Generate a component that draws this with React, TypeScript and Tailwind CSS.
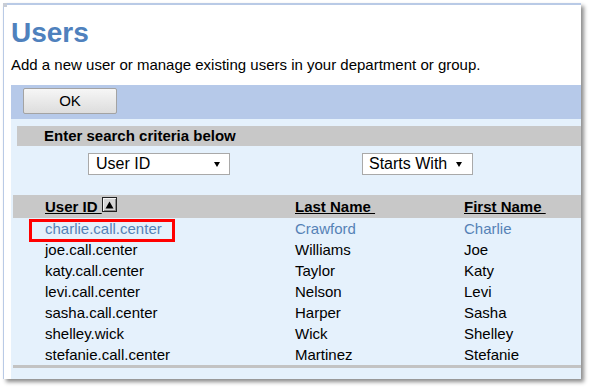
import React from 'react';

type UserRow = {
  id: string;
  last: string;
  first: string;
  selected?: boolean;
};

const users: UserRow[] = [
  { id: 'charlie.call.center', last: 'Crawford', first: 'Charlie', selected: true },
  { id: 'joe.call.center', last: 'Williams', first: 'Joe' },
  { id: 'katy.call.center', last: 'Taylor', first: 'Katy' },
  { id: 'levi.call.center', last: 'Nelson', first: 'Levi' },
  { id: 'sasha.call.center', last: 'Harper', first: 'Sasha' },
  { id: 'shelley.wick', last: 'Wick', first: 'Shelley' },
  { id: 'stefanie.call.center', last: 'Martinez', first: 'Stefanie' },
];

function DownArrow() {
  return (
    <svg width="6" height="5" viewBox="0 0 6 5" className="shrink-0">
      <path d="M0 0 H6 L3 5 Z" fill="#000" />
    </svg>
  );
}

function SortIcon() {
  return (
    <span className="inline-flex items-center justify-center w-[15px] h-[15px] border border-[#222] bg-[#d6d6d6] shadow-[inset_1px_1px_0_#f4f4f4,inset_-1px_-1px_0_#8a8a8a] align-top mt-[2px]">
      <svg width="9" height="8" viewBox="0 0 9 8">
        <path d="M4.5 0.5 L8.5 7.5 H0.5 Z" fill="#000" />
      </svg>
    </span>
  );
}

export default function App() {
  return (
    <div className="w-[590px] h-[387px] bg-white pt-[3px] pl-[3px] font-['Liberation_Sans',Arial,sans-serif] text-black overflow-hidden">
      <div className="relative w-[578px] h-[376px] bg-white border-t-2 border-l border-[#b9cae6] shadow-[3px_3px_4px_rgba(0,0,0,0.45)] flex flex-col">
        <div className="absolute -top-[2px] -left-px w-[4px] h-[4px] bg-[#c8cdd6]" />

        <div className="pl-[7px]">
          <h1 className="mt-[12px] text-[28px] leading-[32px] font-bold text-[#4f81bd]">Users</h1>
          <p className="mt-[7px] text-[15px] leading-[18px]">
            Add a new user or manage existing users in your department or group.
          </p>
        </div>

        <div className="ml-[7px] mt-[11px] flex-1 flex flex-col">
          <div className="h-[34px] bg-[#b6c9e9] pl-[12px] pt-[3px]">
            <button className="w-[94px] h-[26px] rounded-[2px] border border-[#a3a3a3] bg-gradient-to-b from-[#f6f6f6] to-[#dddddd] text-[15px] leading-[24px]">
              OK
            </button>
          </div>

          <div className="flex-1 bg-[#e5f1fc] pt-[7px]">
            <div className="ml-[6px] h-[20px] bg-[#c8c8c8] pl-[27px] text-[15px] leading-[20px] font-bold">
              Enter search criteria below
            </div>

            <div className="mt-[7px] flex">
              <div className="ml-[77px] w-[142px] h-[22px] border border-[#a9a9a9] bg-white flex items-center justify-between pl-[7px] pr-[9px] text-[16px] leading-[20px] whitespace-nowrap">
                <span>User ID</span>
                <DownArrow />
              </div>
              <div className="ml-[132px] w-[111px] h-[22px] border border-[#a9a9a9] bg-white flex items-center gap-[9px] pl-[6px] text-[16px] leading-[20px] whitespace-nowrap overflow-hidden">
                <span>Starts With</span>
                <DownArrow />
              </div>
            </div>

            <div className="mt-[20px] ml-[2px]">
              <div className="h-[23px] bg-[#c8c8c8] grid grid-cols-[282px_169px_1fr] text-[15px] leading-[23px] font-bold">
                <div className="pl-[32px] flex">
                  <span className="underline">User ID&nbsp;</span>
                  <SortIcon />
                </div>
                <div>
                  <span className="underline">Last Name&nbsp;</span>
                </div>
                <div>
                  <span className="underline">First Name&nbsp;</span>
                </div>
              </div>

              {users.map((u) => (
                <div
                  key={u.id}
                  className={`h-[21px] grid grid-cols-[282px_169px_1fr] text-[15px] leading-[21px] ${
                    u.selected ? 'text-[#5582b6]' : 'text-black'
                  }`}
                >
                  <div className="pl-[32px] relative">
                    {u.selected && (
                      <div className="absolute left-[16px] top-[1px] w-[146px] h-[23px] border-[3px] border-[#ff0000]" />
                    )}
                    <span className="relative">{u.id}</span>
                  </div>
                  <div>{u.last}</div>
                  <div>{u.first}</div>
                </div>
              ))}

              <div className="h-[3px] bg-[#c3c3c3]" />
            </div>
          </div>
        </div>
      </div>
    </div>
  );
}
